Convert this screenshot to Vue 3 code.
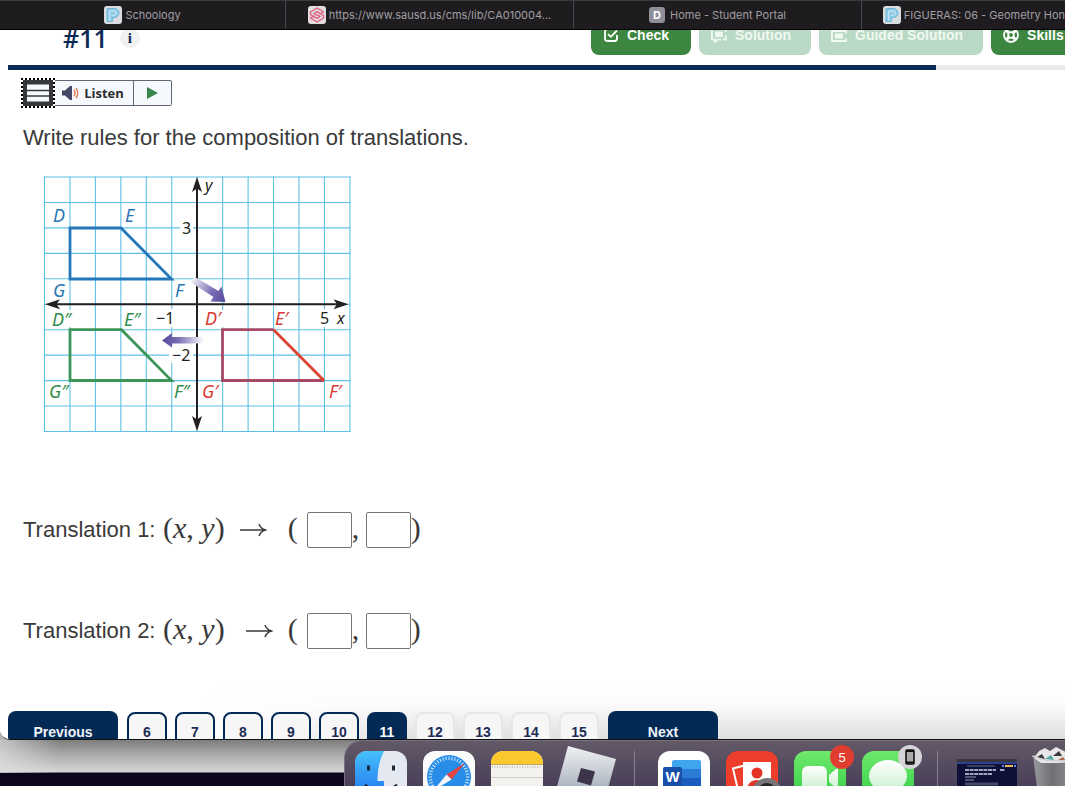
<script setup>
import { ref } from 'vue'

const tabs = [
  { title: 'Schoology', icon: 'p' },
  { title: 'https://www.sausd.us/cms/lib/CA010004...', icon: 's' },
  { title: 'Home - Student Portal', icon: 'd' },
  { title: 'FIGUERAS: 06 - Geometry Hon', icon: 'p' }
]

const pages = [
  { n: 6, state: 'done' },
  { n: 7, state: 'done' },
  { n: 8, state: 'done' },
  { n: 9, state: 'done' },
  { n: 10, state: 'done' },
  { n: 11, state: 'current' },
  { n: 12, state: 'todo' },
  { n: 13, state: 'todo' },
  { n: 14, state: 'todo' },
  { n: 15, state: 'todo' }
]

const answers = ref([
  { x: '', y: '' },
  { x: '', y: '' }
])

const progress = 87.8

// Grid geometry in drawing units
const left = 44.5
const top = 177
const step = 25.45
const cols = Array.from({ length: 13 }, (_, i) => left + i * step)
const rows = Array.from({ length: 11 }, (_, i) => top + i * step)
const ticks = Array.from({ length: 40 }, (_, i) => i * 9)
</script>

<template>
  <div class="desktop">
    <div class="window">
      <nav class="tabs" aria-label="Browser tabs">
        <a v-for="(tab, i) in tabs" :key="i" href="#" class="tab">
          <svg v-if="tab.icon === 'p'" class="favicon" viewBox="0 0 18 18" aria-hidden="true">
            <rect width="18" height="18" rx="3" fill="#d9dde0" />
            <path d="M3 15.500V2.500h7.500a4.300 4.300 0 0 1 0 9H8.500v4z" fill="#8fcbe9" stroke="#6db4d8" stroke-width="1" />
            <path d="M5.700 15V5h4.600a2 2 0 0 1 0 4.200H7.800" fill="none" stroke="#e4eff5" stroke-width=".8" />
          </svg>
          <svg v-else-if="tab.icon === 's'" class="favicon" viewBox="0 0 18 18" aria-hidden="true">
            <rect width="18" height="18" rx="3" fill="#e2dcdf" />
            <path d="M12.500 7.800l3-1.800L9 2 2.500 6v2.500L9 12.300l3-1.900-3-1.900M5.500 10.200l-3 1.800L9 16l6.500-4V9.500L9 5.700 6 7.600l3 1.900" fill="none" stroke="#e0607f" stroke-width="1.400" stroke-linejoin="round" />
          </svg>
          <span v-else class="letter">D</span>
          <span class="tab-title">{{ tab.title }}</span>
        </a>
      </nav>

      <header class="header">
        <div class="heading">
          <h1>#11</h1>
          <button class="info" aria-label="Information">i</button>
        </div>
        <div class="actions">
          <button class="action">
            <svg viewBox="0 0 16 16" aria-hidden="true">
              <path d="M9.500 2H4.500A2.500 2.500 0 0 0 2 4.500v7A2.500 2.500 0 0 0 4.500 14h7a2.500 2.500 0 0 0 2.500-2.500V8" />
              <path d="M5 7.200l2.800 2.600L14 3.500" />
            </svg>
            Check
          </button>
          <button class="action" disabled>
            <svg viewBox="0 0 16 16" aria-hidden="true">
              <path d="M15 5V2H1v10.500h3V15l3-2.500h3M15 8.500v4h-3" />
              <rect x="4" y="4.500" width="8" height="5.500" class="solid" />
            </svg>
            Solution
          </button>
          <button class="action" disabled>
            <svg viewBox="0 0 16 16" aria-hidden="true">
              <path d="M15 6.500V4H1v10h14v-3M8 4V1M5 2h6" />
              <rect x="4" y="6.500" width="8" height="5" class="solid" />
            </svg>
            Guided Solution
          </button>
          <button class="action last">
            <svg viewBox="0 0 16 16" aria-hidden="true">
              <circle cx="8" cy="8" r="7" />
              <circle cx="8" cy="8" r="2.800" />
              <path d="M3.500 3.500l2.500 2.500M12.500 3.500L10 6M3.500 12.500L6 10M12.500 12.500L10 10" class="heavy" />
            </svg>
            Skills
          </button>
        </div>
      </header>
      <div class="track"><div class="fill" :style="{ width: progress + '%' }"></div></div>

      <main class="content">
        <div class="reader">
          <button class="menu" aria-label="Reader menu">
            <svg viewBox="0 0 30 26" aria-hidden="true">
              <rect width="30" height="26" fill="#35373b" />
              <path d="M4 4.500h22v17H4z" fill="#f4f8fc" />
              <path d="M4 10.500h22M4 16h22" stroke="#35373b" stroke-width="1.500" />
            </svg>
          </button>
          <button class="listen">
            <svg viewBox="0 0 18 14" aria-hidden="true">
              <path d="M0 4.500h3L8 0h2v14H8L3 9.500H0z" fill="#454768" />
              <path d="M12 4q2 3 0 6M14 2q3.500 5 0 10" fill="none" stroke="#e57a54" stroke-width="1.400" />
            </svg>
            Listen
          </button>
          <button class="play" aria-label="Play">
            <svg viewBox="0 0 12 12" aria-hidden="true"><path d="M0 0l11 6-11 6z" fill="#37864a" /></svg>
          </button>
        </div>

        <p class="prompt">Write rules for the composition of translations.</p>

        <svg class="graph" viewBox="30 165 330 276" role="img" aria-label="Coordinate plane with three trapezoids">
          <defs>
            <linearGradient id="fadeA" gradientUnits="userSpaceOnUse" x1="190" y1="278" x2="226" y2="301">
              <stop offset="0" stop-color="#fff" />
              <stop offset=".6" stop-color="#7b70b5" />
              <stop offset="1" stop-color="#54489c" />
            </linearGradient>
            <linearGradient id="fadeB" gradientUnits="userSpaceOnUse" x1="204" y1="0" x2="162" y2="0">
              <stop offset="0" stop-color="#fff" />
              <stop offset=".6" stop-color="#7b70b5" />
              <stop offset="1" stop-color="#54489c" />
            </linearGradient>
          </defs>
          <g stroke="#5fc0e6" stroke-width="1.100">
            <line v-for="x in cols" :key="'c' + x" :x1="x" :x2="x" y1="176.500" y2="432" />
            <line v-for="y in rows" :key="'r' + y" :y1="y" :y2="y" x1="44" x2="350.500" />
          </g>
          <g fill="#fff">
            <rect x="180" y="220" width="13" height="16" />
            <rect x="154" y="309" width="24" height="18" />
            <rect x="169" y="347" width="24" height="16" />
            <rect x="317" y="309" width="14" height="18" />
            <rect x="52" y="310" width="20" height="17" />
            <rect x="206" y="310" width="19" height="17" />
            <rect x="52" y="283" width="15" height="16" />
          </g>
          <g stroke="#231f20" stroke-width="2">
            <path d="M197 184v240M52 304.200h290" />
          </g>
          <g fill="#231f20">
            <path d="M197 177l5 15-5-3.500-5 3.500z" />
            <path d="M197 431l5-15-5 3.500-5-3.500z" />
            <path d="M45 304.200l15-5-3.500 5 3.500 5z" />
            <path d="M348.500 304.200l-15-5 3.500 5-3.500 5z" />
          </g>
          <path d="M194 276.500l24.500 14.500 3-4.500 4 15.500-15-.5 3-4.500-22.500-14.500z" fill="url(#fadeA)" />
          <path d="M203 337h-31v-4l-10 7.500 10 7v-4h31z" fill="url(#fadeB)" />
          <g fill="none" stroke-width="2.800">
            <path d="M70 228h51l50.500 51H70z" stroke="#2478b9" />
            <path d="M70 329.700h51.500l50 50.800H70z" stroke="#3d9659" />
            <path d="M273.500 329.700h-51v50.800H324" stroke="#a64964" />
            <path d="M273.500 329.700l50.500 50.800" stroke="#dd4330" />
          </g>
          <g class="labels">
            <g fill="#2a76b5">
              <text x="53" y="222">D</text>
              <text x="125" y="222">E</text>
              <text x="53" y="297">G</text>
              <text x="175" y="297">F</text>
            </g>
            <g fill="#328c4a">
              <text x="52" y="326">D″</text>
              <text x="124" y="326">E″</text>
              <text x="49" y="398">G″</text>
              <text x="174" y="398">F″</text>
            </g>
            <g fill="#d93a35">
              <text x="205" y="325">D′</text>
              <text x="275" y="325">E′</text>
              <text x="202" y="398">G′</text>
              <text x="329" y="398">F′</text>
            </g>
            <g fill="#231f20" class="axis">
              <text x="205" y="191">y</text>
              <text x="337" y="324">x</text>
            </g>
          </g>
          <g class="numbers" fill="#231f20">
            <text x="182" y="234">3</text>
            <text x="156" y="324">−1</text>
            <text x="172" y="361">−2</text>
            <text x="320" y="324">5</text>
          </g>
        </svg>

        <div v-for="(a, i) in answers" :key="i" class="rule">
          <span class="name">Translation {{ i + 1 }}:</span>
          <span class="math">(<i>x</i>, <i>y</i>)</span>
          <span class="arrow-slot" :class="{ end: i === 1 }">
            <svg viewBox="0 0 28 14" role="img" aria-label="maps to">
              <path d="M1 7h25M20 1q1.500 4.500 6.500 6-5 1.500-6.500 6" />
            </svg>
          </span>
          <span class="math open">(</span>
          <input v-model="a.x" type="text" :aria-label="'Translation ' + (i + 1) + ' x'" />
          <span class="math comma">,</span>
          <input v-model="a.y" type="text" :aria-label="'Translation ' + (i + 1) + ' y'" />
          <span class="math">)</span>
        </div>
      </main>

      <nav class="pager" aria-label="Questions">
        <button class="wide">Previous</button>
        <div class="pages">
          <button v-for="p in pages" :key="p.n" class="page" :class="p.state">{{ p.n }}</button>
        </div>
        <button class="wide">Next</button>
      </nav>
    </div>

    <div class="below">
      <div class="dock">
        <svg class="app" viewBox="0 0 52 52" role="img" aria-label="Finder">
          <defs>
            <linearGradient id="finder" x2="0" y2="1"><stop stop-color="#45c0fa" /><stop offset="1" stop-color="#1c6df0" /></linearGradient>
            <clipPath id="round"><rect width="52" height="52" rx="12" /></clipPath>
          </defs>
          <g clip-path="url(#round)">
            <rect width="52" height="52" fill="#e4e8f1" />
            <path d="M0 0h29q-7 14-6.500 30H29v22H0z" fill="url(#finder)" />
          </g>
          <path d="M13.500 14.500v5M38.500 14.500v5" stroke="#1d2735" stroke-width="3" />
          <path d="M10 33.500q16 12 32 0" fill="none" stroke="#1d2735" stroke-width="2" />
        </svg>
        <svg class="app" viewBox="0 0 52 52" role="img" aria-label="Safari">
          <rect width="52" height="52" rx="12" fill="#fbfbfc" />
          <circle cx="26" cy="26" r="22" fill="#288ce9" />
          <g stroke="#d9edfc" stroke-width="1">
            <line v-for="t in ticks" :key="t" x1="26" x2="26" y1="5.500" y2="9" :transform="`rotate(${t} 26 26)`" />
          </g>
          <path d="M42 12L23.500 23.500l5 5z" fill="#e34440" />
          <path d="M10 40l13.500-16.500 5 5z" fill="#f3f5f7" />
        </svg>
        <svg class="app" viewBox="0 0 52 52" role="img" aria-label="Notes">
          <g clip-path="url(#round)">
            <rect width="52" height="52" fill="#f3f2ef" />
            <rect width="52" height="13" fill="#fbc92e" />
            <path d="M0 13.500h52" stroke="#bda65c" />
          </g>
          <path d="M1 16h50" stroke="#bbb9b5" stroke-width="1.500" stroke-dasharray="1 1.500" />
          <path d="M0 26.500h52" stroke="#cfceca" />
        </svg>
        <svg class="app" viewBox="0 0 52 52" role="img" aria-label="Roblox">
          <defs>
            <linearGradient id="roblox" x2="0" y2="1"><stop stop-color="#f0f1f3" /><stop offset="1" stop-color="#8a99a7" /></linearGradient>
          </defs>
          <path d="M9 -5l48 13-13 48-48-13z" fill="url(#roblox)" />
          <path d="M22 17l14 3.500-4 14-14-4z" fill="#3c3549" />
        </svg>
        <span class="divider"></span>
        <svg class="app" viewBox="0 0 52 52" role="img" aria-label="Word">
          <rect width="52" height="52" rx="12" fill="#fff" />
          <path d="M14 11q0-2 2-2h25q2 0 2 2v7H14z" fill="#3fa5ef" />
          <path d="M14 18h29v9H14z" fill="#2a7cd6" />
          <path d="M14 27h29v9H14z" fill="#1b5dbe" />
          <path d="M14 36h29v8H14z" fill="#144394" />
          <rect x="5" y="16" width="19" height="20" rx="2" fill="#174fa9" />
          <text x="14.500" y="31" text-anchor="middle" class="w">W</text>
        </svg>
        <svg class="app" viewBox="0 0 52 52" role="img" aria-label="Photo Booth">
          <rect width="52" height="52" rx="12" fill="#ed3e2b" />
          <path d="M20 14L7 17.500l6 26" fill="none" stroke="#fff" stroke-width="2" />
          <rect x="17" y="11" width="28" height="33" fill="#fff" />
          <circle cx="31" cy="22" r="5.500" fill="#e43428" />
          <path d="M20 40q2-11 11-11t11 11z" fill="#e43428" />
          <circle cx="41" cy="42" r="15" fill="#777577" />
          <circle cx="41" cy="42" r="10" fill="#28262a" />
        </svg>
        <div class="badged">
          <svg class="app" viewBox="0 0 52 52" role="img" aria-label="FaceTime">
            <defs>
              <linearGradient id="green" x2="0" y2="1"><stop stop-color="#6fe96b" /><stop offset="1" stop-color="#31cc45" /></linearGradient>
              <linearGradient id="milk" x2="0" y2="1"><stop stop-color="#fff" /><stop offset="1" stop-color="#c9efcc" /></linearGradient>
            </defs>
            <rect width="52" height="52" rx="12" fill="url(#green)" />
            <rect x="8" y="15" width="25" height="24" rx="6" fill="url(#milk)" />
            <path d="M35 24l7-6q2-1 2 1v17q0 2-2 1l-7-6z" fill="url(#milk)" />
          </svg>
          <span class="badge">5</span>
        </div>
        <div class="badged">
          <svg class="app" viewBox="0 0 52 52" role="img" aria-label="Messages">
            <rect width="52" height="52" rx="12" fill="url(#green)" />
            <ellipse cx="26" cy="25" rx="19" ry="16" fill="url(#milk)" />
          </svg>
          <span class="badge device">
            <svg viewBox="0 0 10 16" aria-hidden="true">
              <rect x="1" y="1" width="8" height="14" rx="1" fill="#aaa" stroke="#111" stroke-width="1.600" />
              <path d="M1 2h8M1 13.500h8" stroke="#111" stroke-width="2" />
            </svg>
          </span>
        </div>
        <div class="shelf">
          <svg class="thumb" viewBox="0 0 60 44" role="img" aria-label="Minimized window">
            <rect width="60" height="44" fill="#0e1038" />
            <rect width="60" height="3" fill="#3a3538" />
            <rect y="3" width="60" height="2" fill="#2b3f93" />
            <path d="M10 7h28" stroke="#34405e" stroke-width="2" />
            <path d="M48 7h8" stroke="#e6b661" stroke-width="2" />
            <path d="M45 7h2M57 7h2" stroke="#5b83ed" stroke-width="2" />
            <path d="M8 11h31M43 11h5M8 15h27" stroke="#d5d9e9" stroke-width="1.300" stroke-dasharray="4 .6" />
            <path d="M8 18h11M8 21h9" stroke="#969bb5" />
            <path d="M8 25h33" stroke="#464b69" stroke-width="3" />
          </svg>
          <svg class="trash" viewBox="0 0 52 52" role="img" aria-label="Trash">
            <defs>
              <linearGradient id="bin"><stop stop-color="#999a9e" /><stop offset=".4" stop-color="#707176" /><stop offset="1" stop-color="#96979a" /></linearGradient>
            </defs>
            <path d="M2 4h48l-6 48H8z" fill="url(#bin)" />
            <path d="M3 7l5-7 6-3 5 3 6-4 10 5 8-3 7 8-10 5-12 1H10z" fill="#e8e6e7" />
            <path d="M6 6l5-3 3 5zM22 5l6-5 3 5zM38 2l5 5-6 2z" fill="#3c383d" />
            <path d="M14 8l6-4 3 5z" fill="#53a7a2" />
            <path d="M27 9l5-3 3 4z" fill="#b36549" />
            <path d="M1 5q24 10 50 0" fill="none" stroke="#c9c9cc" stroke-width="1.200" />
          </svg>
        </div>
      </div>
    </div>
  </div>
</template>

<style>
body {
  margin: 0;
  background: #0d041d;
}
</style>

<style scoped>
.desktop {
  display: flex;
  flex-direction: column;
  height: 100vh;
  overflow: hidden;
  background: #b4b4b4;
  font-family: "Liberation Sans", Arial, sans-serif;
  color: #3a3a3a;
}
.desktop * {
  box-sizing: border-box;
}
button {
  font-family: inherit;
  padding: 0;
  border: 0;
  cursor: pointer;
}
svg {
  display: block;
  flex-shrink: 0;
}
.window {
  flex: 1;
  min-height: 0;
  display: flex;
  flex-direction: column;
  overflow: hidden;
  background: #fff;
  border-bottom: 1px solid #111;
  border-bottom-left-radius: 10px;
}

/* Browser tabs */
.tabs {
  display: grid;
  grid-template-columns: 286fr 288fr 288fr 203fr;
  flex-shrink: 0;
  height: 30px;
  position: relative;
  z-index: 1;
  background: #1e1c1f;
  border-top: 1px solid #3c3b3e;
  border-bottom: 1px solid #000;
}
.tab {
  display: flex;
  align-items: center;
  justify-content: center;
  gap: 3px;
  min-width: 0;
  border-right: 1px solid #48464a;
  color: #a09ea2;
  font: 11px/16px Inter, "Liberation Sans", sans-serif;
  text-decoration: none;
  white-space: nowrap;
}
.tab:last-child {
  justify-content: flex-end;
  border-right: 0;
}
.favicon {
  width: 18px;
  height: 18px;
}
.letter {
  width: 16px;
  margin-right: 2px;
  border-radius: 3px;
  background: #8f8e9b;
  color: #fff;
  font-weight: 700;
  text-align: center;
}

/* Question header, scrolled partly beneath the tabs */
.header {
  display: grid;
  grid-template-columns: 591fr 474fr;
  flex-shrink: 0;
  height: 50px;
  margin-top: -15px;
}
.heading {
  display: flex;
  align-items: center;
  gap: 12px;
  height: 46px;
  padding-left: 63px;
}
h1 {
  margin: 0;
  color: #0b2a55;
  font: 600 25px/32px "Open Sans", sans-serif;
}
.info {
  width: 20px;
  height: 20px;
  border-radius: 50%;
  background: #f1f1f1;
  color: #0b2a55;
  font: 700 15px/20px "Liberation Serif", serif;
}
.actions {
  display: flex;
  align-items: flex-start;
  gap: 8px;
  min-width: 0;
  overflow: hidden;
}
.action {
  display: flex;
  flex-shrink: 0;
  align-items: center;
  gap: 8px;
  min-width: 100px;
  height: 40px;
  padding: 0 20px 0 12px;
  border-radius: 8px;
  background: #3c863f;
  color: #fff;
  font-size: 14px;
  font-weight: 700;
  white-space: nowrap;
}
.action:disabled {
  background: #b9d9c4;
  color: #f0f8f2;
}
.action.last {
  min-width: 120px;
}
.action svg {
  width: 16px;
  height: 16px;
  fill: none;
  stroke: currentColor;
  stroke-width: 1.8;
}
.action .solid {
  fill: currentColor;
  stroke: none;
}
.action .heavy {
  stroke-width: 3;
}
.track {
  flex-shrink: 0;
  height: 5px;
  margin-left: 8px;
  background: #e9e9e9;
}
.fill {
  height: 100%;
  background: #0b2a55;
}

/* Question body */
.content {
  flex: 1;
  min-height: 0;
  padding: 8px 23px 0;
}
.reader {
  display: flex;
  align-items: center;
  height: 30px;
  margin-left: -2px;
}
.menu {
  border: 2px dotted #000;
  background: #fff;
}
.menu svg {
  width: 30px;
  height: 26px;
}
.listen,
.play {
  display: flex;
  align-items: center;
  justify-content: center;
  height: 26px;
  border: 1px solid #5f6773;
  background: #f5f9fd;
}
.listen {
  gap: 4px;
  width: 79px;
  padding-right: 2px;
  border-left: 0;
  color: #2c2d30;
  font: 700 13px/18px "Open Sans", sans-serif;
}
.listen svg {
  width: 18px;
  height: 14px;
}
.play {
  width: 38px;
  border-left: 0;
  border-radius: 0 2px 2px 0;
}
.play svg {
  width: 12px;
  height: 12px;
}
.prompt {
  margin: 14px 0 0;
  font-size: 22px;
  line-height: 32px;
}
.graph {
  width: 330px;
  height: 276px;
  margin: 11px 0 71px 7px;
}
.labels {
  font: italic 18px "Noto Sans", sans-serif;
}
.labels .axis {
  font-size: 16px;
}
.numbers {
  font: 16px "Noto Sans", sans-serif;
}
.rule {
  display: flex;
  align-items: center;
  height: 36px;
  margin-bottom: 65px;
}
.name {
  width: 140px;
  font-size: 22px;
  white-space: nowrap;
}
.math {
  padding-bottom: 4px;
  font: 30px/32px "Liberation Serif", "Times New Roman", serif;
  white-space: nowrap;
}
.arrow-slot {
  display: flex;
  width: 34px;
  margin: 0 15px 0 14px;
}
.arrow-slot.end {
  justify-content: flex-end;
}
.arrow-slot svg {
  width: 28px;
  height: 14px;
  fill: none;
  stroke: #3a3a3a;
  stroke-width: 1.5;
}
.open {
  width: 19px;
}
.comma {
  width: 14px;
}
.rule input {
  width: 45px;
  height: 36px;
  padding: 0 4px;
  border: 1px solid #767676;
  border-radius: 2px;
  background: #fff;
  font-size: 20px;
}

/* Question navigation, cut off by the window edge */
.pager {
  display: flex;
  align-items: flex-start;
  flex-shrink: 0;
  gap: 9px;
  height: 54px;
  padding: 26px 8px 0;
  overflow: hidden;
  background: linear-gradient(90deg, #fff 200px, transparent 420px), linear-gradient(#fff, #fafafa 40%, #dedede);
}
.pages {
  display: flex;
  gap: 8px;
  padding-top: 1px;
}
.wide,
.page {
  flex-shrink: 0;
  font-size: 14px;
  font-weight: 700;
}
.wide {
  width: 110px;
  height: 42px;
  border-radius: 8px;
  background: #032a55;
  color: #f0f3f7;
}
.page {
  width: 40px;
  height: 40px;
  border: 2px solid #032a55;
  border-radius: 8px;
  background: #f6f6f7;
  color: #1b2c55;
}
.page.current {
  background: #032a55;
  color: #fff;
}
.page.todo {
  border-color: #e7e7e9;
}

/* Second window's lower edge and the dock */
.below {
  flex-shrink: 0;
  height: 46px;
  overflow: hidden;
  background:
    linear-gradient(90deg, rgba(225, 225, 225, 0.7), transparent 60px) 0 0 / 100% 33px no-repeat,
    linear-gradient(#7d7d7d, #a8a8a8 14px, #d6d6d6 32px, #0d041d 33px);
}
.dock {
  display: flex;
  gap: 16px;
  height: 80px;
  margin-left: 344px;
  padding: 10px 0 0 10px;
  border: 1px solid #777080;
  border-right: 0;
  border-radius: 18px 0 0 18px;
  background: linear-gradient(#625967, #4a3f59 46px);
  overflow: hidden;
}
.app {
  width: 52px;
  height: 52px;
  overflow: visible;
}
.divider {
  flex-shrink: 0;
  width: 1px;
  margin: 0 7px;
  background: #877f8d;
}
.w {
  font: 700 15px "Liberation Sans", sans-serif;
  fill: #fff;
}
.badged {
  position: relative;
}
.badge {
  position: absolute;
  top: -6px;
  right: -8px;
  display: flex;
  align-items: center;
  justify-content: center;
  width: 24px;
  height: 24px;
  border-radius: 50%;
  background: #e13c30;
  color: #fff;
  font: 13px "Liberation Sans", sans-serif;
}
.badge.device {
  background: #d5d4d8;
}
.device svg {
  width: 10px;
  height: 16px;
}
.shelf {
  display: flex;
  gap: 14px;
  margin-left: 7px;
  padding-left: 19px;
  border-left: 1px solid #877f8d;
}
.thumb {
  width: 60px;
  height: 44px;
  margin-top: 8px;
}
.trash {
  width: 52px;
  height: 52px;
  overflow: visible;
}
</style>
